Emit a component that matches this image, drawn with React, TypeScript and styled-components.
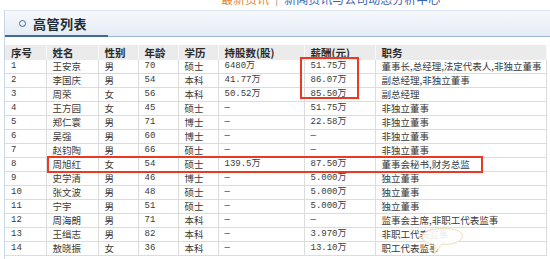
import React from 'react'
import styled, { createGlobalStyle } from 'styled-components'

const Global = createGlobalStyle`
  html, body {
    margin: 0;
    padding: 0;
    background: #fff;
  }
  body {
    font-family: 'Noto Sans CJK SC', 'Noto Sans', sans-serif;
  }
`

const Page = styled.div`
  width: 550px;
  height: 259px;
  overflow: hidden;
  position: relative;
  background: #fff;
`

const TopStrip = styled.div`
  height: 6px;
  overflow: hidden;
  display: flex;
  padding-left: 221px;
  gap: 6px;
  font-size: 12px;
  line-height: 12px;

  span {
    margin-top: -7px;
    white-space: nowrap;
  }
  .hot {
    color: #e58a2c;
  }
  .sep {
    color: #999;
  }
  .link {
    color: #3a62b0;
  }
`

const Panel = styled.div`
  margin: 4px 0 0 4px;
  border-left: 1px solid #c9d7e6;
  border-top: 1px solid #dbe5ef;
  height: 260px;
`

const TitleBar = styled.div`
  height: 25px;
  display: flex;
  align-items: center;
  gap: 7px;
  padding-left: 14px;
  background: linear-gradient(#f6f9fc, #e3ebf4);
  border-bottom: 1px solid #9fb7d3;
  position: relative;

  &::after {
    content: '';
    position: absolute;
    left: 0;
    bottom: -1px;
    width: 103px;
    height: 2px;
    background: #3f6b9c;
  }
`

const Ring = styled.span`
  width: 5px;
  height: 5px;
  border: 1.5px solid #3f6b9c;
  border-radius: 50%;
`

const Title = styled.h2`
  margin: 0;
  font-size: 13px;
  font-weight: 700;
  color: #1e2a36;
  letter-spacing: 0.5px;
`

const TableWrap = styled.div`
  position: relative;
  margin-top: 8px;
`

const Table = styled.table`
  border-collapse: collapse;
  width: 541px;
  table-layout: fixed;
  font-size: 10px;
  color: #333;
`

const Th = styled.th`
  height: 15px;
  padding: 0 0 0 6px;
  text-align: left;
  font-family: 'Noto Sans CJK SC', sans-serif;
  font-size: 10.5px;
  font-weight: 700;
  color: #2a2a2a;
  background: #ebebeb;
  border-right: 1px solid #f8f8f8;
  line-height: 14px;
  white-space: nowrap;
`

const Td = styled.td<{ cn?: boolean }>`
  height: 13px;
  padding: 0 0 0 6px;
  line-height: 13px;
  border-bottom: 1px solid #dcdcdc;
  border-right: 1px solid #dcdcdc;
  font-family: ${(p) =>
    p.cn ? "'Noto Sans CJK SC', sans-serif" : "'Liberation Mono', 'Noto Sans CJK SC', monospace"};
  font-size: ${(p) => (p.cn ? '9.5px' : '9px')};
  white-space: nowrap;
  overflow: hidden;
  color: #3a3a3a;
`

const RedBox = styled.div<{ x: number; y: number; w: number; h: number }>`
  position: absolute;
  left: ${(p) => p.x}px;
  top: ${(p) => p.y}px;
  width: ${(p) => p.w}px;
  height: ${(p) => p.h}px;
  border: 2px solid #ec3a22;
  box-sizing: border-box;
  pointer-events: none;
`

const Mark = styled.svg`
  position: absolute;
  left: 412px;
  top: 224px;
`

const cols = [
  { label: '序号', w: 41 },
  { label: '姓名', w: 52 },
  { label: '性别', w: 40 },
  { label: '年龄', w: 40 },
  { label: '学历', w: 40 },
  { label: '持股数(股)', w: 86 },
  { label: '薪酬(元)', w: 71 },
  { label: '职务', w: 171 },
]

const dash = '—'

const rows: string[][] = [
  ['1', '王安京', '男', '70', '硕士', '6480万', '51.75万', '董事长,总经理,法定代表人,非独立董事'],
  ['2', '李国庆', '男', '54', '本科', '41.77万', '86.07万', '副总经理,非独立董事'],
  ['3', '周荣', '女', '56', '本科', '50.52万', '85.50万', '副总经理'],
  ['4', '王方园', '女', '45', '硕士', dash, '51.75万', '非独立董事'],
  ['5', '郑仁寰', '男', '71', '博士', dash, '22.58万', '非独立董事'],
  ['6', '吴强', '男', '60', '博士', dash, dash, '非独立董事'],
  ['7', '赵钧陶', '男', '66', '硕士', dash, dash, '非独立董事'],
  ['8', '周旭红', '女', '54', '硕士', '139.5万', '87.50万', '董事会秘书,财务总监'],
  ['9', '史学清', '男', '46', '博士', dash, '5.000万', '独立董事'],
  ['10', '张文波', '男', '48', '硕士', dash, '5.000万', '独立董事'],
  ['11', '宁宇', '男', '51', '硕士', dash, '5.000万', '独立董事'],
  ['12', '周海朗', '男', '71', '本科', dash, dash, '监事会主席,非职工代表监事'],
  ['13', '王缉志', '男', '82', '本科', dash, '3.970万', '非职工代表监事'],
  ['14', '敖晓振', '女', '36', '本科', dash, '13.10万', '职工代表监事'],
]

const cnCols = new Set([1, 2, 4, 7])

export default function App() {
  return (
    <Page>
      <Global />
      <TopStrip>
        <span className="hot">最新资讯</span>
        <span className="sep">|</span>
        <span className="link">新闻资讯与公司动态分析中心</span>
      </TopStrip>
      <Panel>
        <TitleBar>
          <Ring />
          <Title>高管列表</Title>
        </TitleBar>
        <TableWrap>
          <Table>
            <colgroup>
              {cols.map((c) => (
                <col key={c.label} style={{ width: c.w }} />
              ))}
            </colgroup>
            <thead>
              <tr>
                {cols.map((c) => (
                  <Th key={c.label}>{c.label}</Th>
                ))}
              </tr>
            </thead>
            <tbody>
              {rows.map((r) => (
                <tr key={r[0]}>
                  {r.map((v, i) => (
                    <Td key={i} cn={cnCols.has(i)}>
                      {v}
                    </Td>
                  ))}
                </tr>
              ))}
            </tbody>
          </Table>
          <RedBox x={295} y={12} w={59} h={42} />
          <RedBox x={42} y={111} w={436} h={17} />
        </TableWrap>
      </Panel>
      <Mark width="70" height="35" viewBox="0 0 70 35">
        <path
          d="M10 12 C10 4 40 2 48 8 C56 14 44 22 30 20 L22 30 L22 20 C12 19 10 16 10 12 Z"
          fill="#fff"
          stroke="#f0d9b0"
          strokeWidth="1"
          opacity="0.9"
        />
      </Mark>
    </Page>
  )
}
